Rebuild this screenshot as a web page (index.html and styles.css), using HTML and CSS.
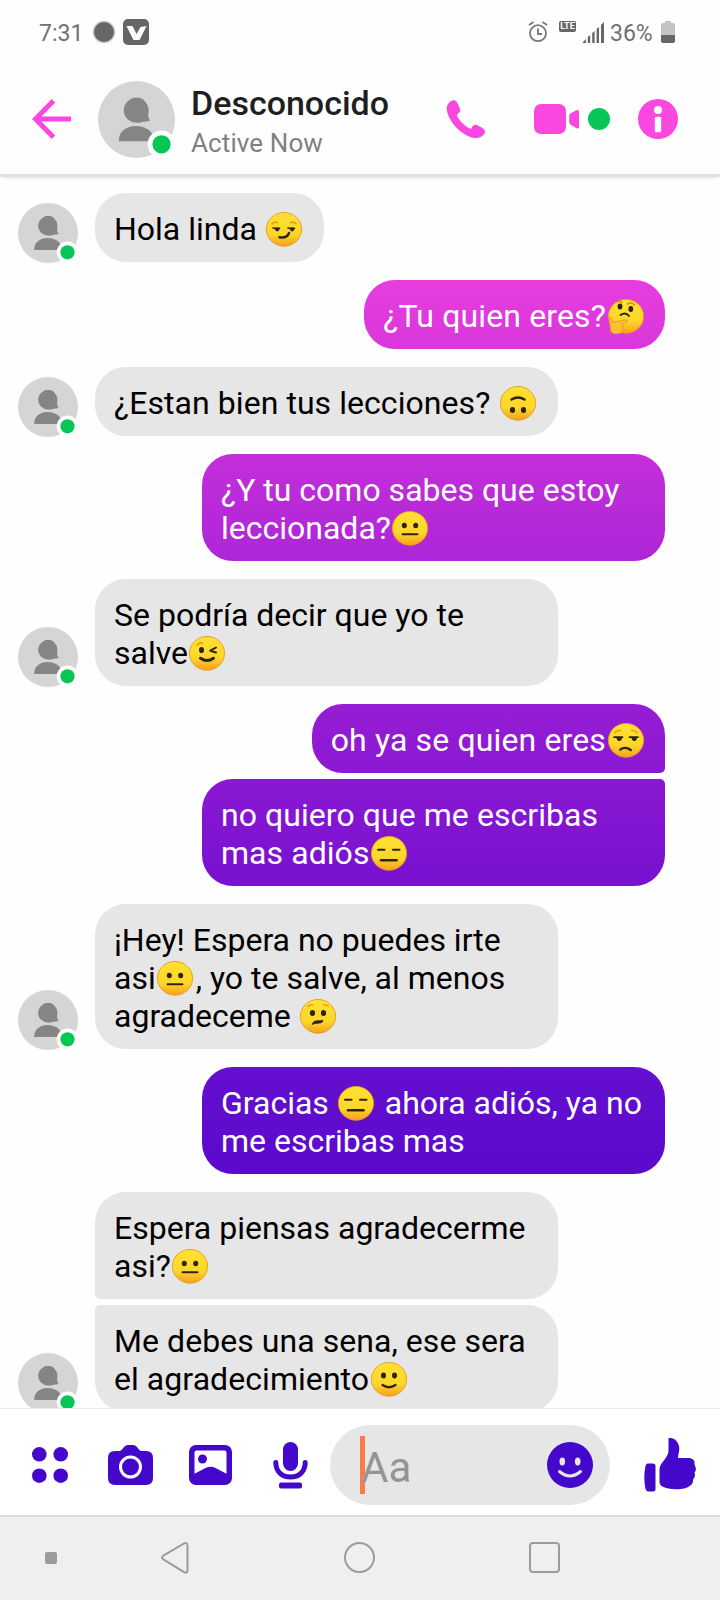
FILE: index.html
```html
<!DOCTYPE html>
<html lang="es">
<head>
<meta charset="utf-8">
<title>Desconocido</title>
<link rel="stylesheet" href="styles.css">
</head>
<body>
<svg class="defs" width="0" height="0" aria-hidden="true">
  <defs>
    <linearGradient id="skin" x1="0" y1="0" x2="0" y2="1">
      <stop offset="0" stop-color="#fee233"/>
      <stop offset=".65" stop-color="#fdd62a"/>
      <stop offset="1" stop-color="#f79f1f"/>
    </linearGradient>
    <symbol id="avatar" viewBox="0 0 60 60">
      <circle cx="30" cy="30" r="30" fill="#d5d5d5"/>
      <circle cx="29.700" cy="22.800" r="9.600" fill="#858585"/>
      <path d="M25 14.300l3-1.200h4.500l3 1.500 3.700 6v7.700l1.400 2.600-4.600.8-5 1z" fill="#858585"/>
      <path d="M16.300 47v-1.500c0-6 6-10.500 13.200-10.500s13 3.700 14 9.200V47z" fill="#858585"/>
      <circle cx="49.500" cy="49.300" r="10.800" fill="#fff"/>
      <circle cx="49.500" cy="49.300" r="7.100" fill="#06c755"/>
    </symbol>
    <symbol id="face" viewBox="0 0 40 35">
      <ellipse cx="20" cy="17.300" rx="17.600" ry="16.900" fill="url(#skin)" stroke="#eb9a1c" stroke-width=".9"/>
    </symbol>
    <symbol id="smirk" viewBox="0 0 40 35">
      <use href="#face"/>
      <path d="M8 12q2.500-3 5.500-1.500M26.500 10.500q3-1.500 5.500 1.500" fill="none" stroke="#e5991f" stroke-width="1.400" stroke-linecap="round"/>
      <path d="M9 16q3.500.8 6.500.2M24 16q3.500.8 6.500.2" fill="none" stroke="#2f230f" stroke-width="1.600" stroke-linecap="round"/>
      <circle cx="13.200" cy="17.300" r="2.100" fill="#2f230f"/><circle cx="28.100" cy="17.300" r="2.100" fill="#2f230f"/>
      <path d="M15.500 25.300q7.500 1.200 9.500-4.300" fill="none" stroke="#2f230f" stroke-width="2.400" stroke-linecap="round"/>
    </symbol>
    <symbol id="thinking" viewBox="0 0 40 35">
      <use href="#face"/>
      <ellipse cx="14" cy="7.500" rx="2.400" ry="2.900" fill="#2f230f"/><ellipse cx="24.800" cy="10" rx="2.400" ry="2.900" fill="#2f230f"/>
      <path d="M10 3.500q3-2.500 6 0M21.500 5q4-2.500 7 1" fill="none" stroke="#d98a1b" stroke-width="1.500" stroke-linecap="round"/>
      <path d="M14.500 16q5-3.500 8.500 1" fill="none" stroke="#2f230f" stroke-width="1.900" stroke-linecap="round"/>
      <path d="M3.500 18.500q1.800-.5 2.500 2l1.200 3q5-1.500 12.800-2.700 2.200 0 1.500 1.700l-5.500 2.500q2 5-.5 8.500-3 2.500-8 1-3.500-1-3.300-6z" fill="#fcc033" stroke="#e8961c" stroke-width=".9"/>
    </symbol>
    <symbol id="upside" viewBox="0 0 40 35">
      <use href="#face"/>
      <path d="M13.500 13.500q6.500-4 13 0" fill="none" stroke="#2f230f" stroke-width="2.400" stroke-linecap="round"/>
      <ellipse cx="14.500" cy="24" rx="2.600" ry="3" fill="#2f230f"/><ellipse cx="25.500" cy="24" rx="2.600" ry="3" fill="#2f230f"/>
    </symbol>
    <symbol id="neutral" viewBox="0 0 40 35">
      <use href="#face"/>
      <ellipse cx="14.300" cy="14.500" rx="2.500" ry="2.800" fill="#2f230f"/><ellipse cx="25.700" cy="14.500" rx="2.500" ry="2.800" fill="#2f230f"/>
      <path d="M12.500 23.200h15" stroke="#2f230f" stroke-width="1.900" stroke-linecap="round"/>
    </symbol>
    <symbol id="wink" viewBox="0 0 40 35">
      <use href="#face"/>
      <path d="M10 9.500q1.500-3.200 5.500-2.500" fill="none" stroke="#e5991f" stroke-width="1.500" stroke-linecap="round"/>
      <ellipse cx="14.500" cy="14" rx="2.500" ry="3.100" fill="#2f230f"/>
      <path d="M29 11.500l-5.700 3.200 5.700 1.800" fill="none" stroke="#2f230f" stroke-width="2" stroke-linecap="round" stroke-linejoin="round"/>
      <path d="M13.500 22.200q6.500 4.600 13 0" fill="none" stroke="#2f230f" stroke-width="2.900" stroke-linecap="round"/>
    </symbol>
    <symbol id="unamused" viewBox="0 0 40 35">
      <use href="#face"/>
      <path d="M8.500 10q2.500-3 6-2.500M25.500 7.500q3.500-.5 6 2.500" fill="none" stroke="#e5991f" stroke-width="1.400" stroke-linecap="round"/>
      <path d="M8 14.200h8.500M23.500 14.200h8.500" stroke="#2f230f" stroke-width="1.700" stroke-linecap="round"/>
      <path d="M10.500 14.500h5.500a2.700 3.400 0 0 1-5.500 0zM25.500 14.500h5.500a2.700 3.400 0 0 1-5.500 0z" fill="#2f230f"/>
      <path d="M14.300 26.500q5-3.500 10.500.5" fill="none" stroke="#2f230f" stroke-width="2.400" stroke-linecap="round"/>
    </symbol>
    <symbol id="expressionless" viewBox="0 0 40 35">
      <use href="#face"/>
      <path d="M9 13.700h6.500M24 13.700h6.500" stroke="#2f230f" stroke-width="2" stroke-linecap="round"/>
      <path d="M12 24.200h15.500" stroke="#2f230f" stroke-width="2.500" stroke-linecap="round"/>
    </symbol>
    <symbol id="confused" viewBox="0 0 40 35">
      <use href="#face"/>
      <path d="M10 7.500q2-2.200 5-1.800M25.500 5.700q3-.4 5 1.800" fill="none" stroke="#e5991f" stroke-width="1.400" stroke-linecap="round"/>
      <ellipse cx="14.500" cy="14" rx="2.600" ry="3" fill="#2f230f"/><ellipse cx="25.500" cy="14" rx="2.600" ry="3" fill="#2f230f"/>
      <path d="M14 25.500q1.500-4 6-3.700 2.500.2 5-.6-.3 3-4.500 3-3.500-.3-6.500 1.300z" fill="#2f230f" stroke="#2f230f" stroke-width=".8" stroke-linejoin="round"/>
    </symbol>
    <symbol id="smile" viewBox="0 0 40 35">
      <use href="#face"/>
      <ellipse cx="14.500" cy="13.500" rx="2.500" ry="3" fill="#2f230f"/><ellipse cx="25.500" cy="13.500" rx="2.500" ry="3" fill="#2f230f"/>
      <path d="M13.500 23q6.500 4.500 13 0" fill="none" stroke="#2f230f" stroke-width="2.300" stroke-linecap="round"/>
    </symbol>
  </defs>
</svg>

<div class="screen">
  <div class="status">
    <span class="time">7:31</span>
    <svg class="rec" width="24" height="24" viewBox="0 0 24 24"><circle cx="12" cy="12" r="11.300" fill="#ccc"/><circle cx="12" cy="12" r="10" fill="#666"/></svg>
    <svg class="vee" width="26" height="26" viewBox="0 0 26 26"><rect width="26" height="26" rx="5" fill="#666"/><path d="M3.500 7h6l4 8 4-7 6-1-7 14h-6z" fill="#fff"/></svg>
    <svg class="alarm" width="20" height="22" viewBox="0 0 20 22" fill="none" stroke="#777" stroke-width="1.800"><circle cx="10" cy="12.200" r="8"/><path d="M10 7.500V13h4M1 4l4.500-3M19 4l-4.500-3"/></svg>
    <span class="lte">LTE</span>
    <svg class="signal" width="22" height="21" viewBox="0 0 22 21" fill="#666"><path d="M0 21v-1l3-3v4zM4.800 21v-6l2.400-2v8zM9.200 21v-10l2.400-2v12zM13.600 21V7l2.400-2v16zM18 21V3l3-3v21z"/></svg>
    <span class="charge">36%</span>
    <svg class="battery" width="14" height="22" viewBox="0 0 14 22"><path d="M4 0h6v2h2.500q1.500 0 1.500 1.500V14H0V3.500Q0 2 1.500 2H4z" fill="#c4c4c4"/><path d="M0 14h14v6q0 2-2 2H2q-2 0-2-2z" fill="#666"/></svg>
  </div>

  <header class="header">
    <svg class="back" width="40" height="40" viewBox="0 0 40 40" fill="none" stroke="#f947e0" stroke-width="5"><path d="M21.500 1.800L3.500 20l18 18.200M3 20h36"/></svg>
    <svg class="photo" width="77" height="77"><use href="#avatar"/></svg>
    <div class="who">
      <div class="name">Desconocido</div>
      <div class="active">Active Now</div>
    </div>
    <svg class="phone" width="39" height="39" viewBox="0 0 39 39" fill="#f947e0"><path d="M7 .3C4 1 .8 4.300.7 8.300c0 6.200 4.800 14.700 10.800 20.500 6 5.700 13.500 9.700 19.500 9.300 4-.2 7.300-3 7.900-6 .3-1.800-.8-3.200-2.500-4.200l-4.600-2.500c-2.500-1.200-5-.3-5.800 2-.3 1.200-1.200 1.500-2.500.9C18.300 25.500 13.500 20.700 11.300 16.200c-.7-1.300-.2-2.200 1-2.800 2.200-1 2.500-3.500 1.300-5.600L11.200 2.500C10.200.8 8.600 0 7 .3z"/></svg>
    <svg class="video" width="46" height="30" viewBox="0 0 46 30" fill="#f947e0"><rect width="32" height="30" rx="7"/><path d="M42.500 6.300q2.500-1 2.500 1.200v15.500q0 2.200-2.500 1.200L37 21q-1.800-1-1.800-3v-6q0-2 1.800-3z"/></svg>
    <span class="online"></span>
    <svg class="info" width="40" height="40" viewBox="0 0 40 40"><circle cx="20" cy="20" r="20" fill="#f947e0"/><circle cx="20" cy="11" r="4" fill="#fff"/><rect x="16.800" y="17.800" width="6.400" height="15.500" rx="1.500" fill="#fff"/></svg>
  </header>

  <main class="chat">
    <div class="group in">
      <svg class="pic"><use href="#avatar"/></svg>
      <div class="stack"><div class="bubble">Hola linda <svg class="emoji"><use href="#smirk"/></svg></div></div>
    </div>
    <div class="group out">
      <div class="bubble loose">¿Tu quien eres?<svg class="emoji"><use href="#thinking"/></svg></div>
    </div>
    <div class="group in">
      <svg class="pic"><use href="#avatar"/></svg>
      <div class="stack"><div class="bubble wide airy">¿Estan bien tus lecciones? <svg class="emoji"><use href="#upside"/></svg></div></div>
    </div>
    <div class="group out">
      <div class="bubble wide">¿Y tu como sabes que estoy<br>leccionada?<svg class="emoji"><use href="#neutral"/></svg></div>
    </div>
    <div class="group in">
      <svg class="pic"><use href="#avatar"/></svg>
      <div class="stack"><div class="bubble wide">Se podría decir que yo te<br>salve<svg class="emoji"><use href="#wink"/></svg></div></div>
    </div>
    <div class="group out">
      <div class="bubble first loose">oh ya se quien eres<svg class="emoji"><use href="#unamused"/></svg></div>
      <div class="bubble wide last airy">no quiero que me escribas<br>mas adiós<svg class="emoji"><use href="#expressionless"/></svg></div>
    </div>
    <div class="group in">
      <svg class="pic"><use href="#avatar"/></svg>
      <div class="stack"><div class="bubble wide">¡Hey! Espera no puedes irte<br>asi<svg class="emoji"><use href="#neutral"/></svg>, yo te salve, al menos<br>agradeceme <svg class="emoji"><use href="#confused"/></svg></div></div>
    </div>
    <div class="group out">
      <div class="bubble wide">Gracias <svg class="emoji"><use href="#expressionless"/></svg> ahora adiós, ya no<br>me escribas mas</div>
    </div>
    <div class="group in">
      <svg class="pic"><use href="#avatar"/></svg>
      <div class="stack">
        <div class="bubble wide first">Espera piensas agradecerme<br>asi?<svg class="emoji"><use href="#neutral"/></svg></div>
        <div class="bubble wide last airy">Me debes una sena, ese sera<br>el agradecimiento<svg class="emoji"><use href="#smile"/></svg></div>
      </div>
    </div>
  </main>

  <footer class="composer">
    <svg class="apps" width="36" height="36" viewBox="0 0 36 36" fill="#4408cc"><circle cx="7.300" cy="7.300" r="7.300"/><circle cx="28.700" cy="7.300" r="7.300"/><circle cx="7.300" cy="28.700" r="7.300"/><circle cx="28.700" cy="28.700" r="7.300"/></svg>
    <svg class="camera" width="45" height="40" viewBox="0 0 45 40"><path d="M7 6h3.500c2 0 2.700-.5 4-2 2-2.500 3-4 6-4h4c3 0 4 1.500 6 4 1.300 1.500 2 2 4 2H38q7 0 7 7v20q0 7-7 7H7q-7 0-7-7V13q0-7 7-7z" fill="#4408cc"/><circle cx="22.500" cy="22" r="10" fill="none" stroke="#fff" stroke-width="3"/></svg>
    <svg class="gallery" width="43" height="40" viewBox="0 0 43 40"><rect width="43" height="40" rx="7" fill="#4408cc"/><path d="M7.500 5.500h28q2 0 2 2v21.200L26.500 23q-5-2.700-10 0L5.500 28.700V7.500q0-2 2-2z" fill="#fff"/><circle cx="13.500" cy="14" r="4.500" fill="#4408cc"/></svg>
    <svg class="mic" width="35" height="47" viewBox="0 0 35 47"><rect x="10" y="0" width="15" height="29" rx="7.500" fill="#4408cc"/><path d="M2.800 20.500c0 9 6 14.500 14.700 14.500s14.700-5.500 14.700-14.500" fill="none" stroke="#4408cc" stroke-width="5" stroke-linecap="round"/><rect x="6" y="40.500" width="23" height="6" rx="2" fill="#4408cc"/></svg>
    <div class="field">
      <span class="caret"></span>
      <span class="hint">Aa</span>
      <svg class="sticker" width="46" height="46" viewBox="0 0 46 46"><circle cx="23" cy="23" r="23" fill="#4408cc"/><ellipse cx="15.300" cy="19.500" rx="2.800" ry="4" fill="#e6e6e6"/><ellipse cx="30.700" cy="19.500" rx="2.800" ry="4" fill="#e6e6e6"/><path d="M12.500 29.500q10.500 9 21 0" fill="none" stroke="#e6e6e6" stroke-width="3" stroke-linecap="round"/></svg>
    </div>
    <svg class="like" width="52" height="54" viewBox="0 0 52 54" fill="#4408cc"><path d="M4 25.500h5q2.500 0 2.500 2.500v23q0 2.500-2.500 2.500H4.500Q2 53.500 1.300 50q-2-11 0-21 .4-3.500 2.700-3.500z"/><path d="M24.500 1c-.5-1 .7-1 2-1 5 0 8.800 5.500 8.800 10.500 0 4-1.300 6-1.300 9.500h10c4 0 7 2 6.500 5.300-.2 1 .2 2 .6 2.700 1.300 2.500.8 5-.6 6.500 1 3 .2 5.700-1.500 7 .5 4-1.800 6-4 6.700-2 2-6.500 3-13 3-6 0-10-1-13-2.500-3-1.400-3.500-3-3.500-6V32c0-5 3-7.500 5.500-11 2.500-3.500 3.500-5.500 3.500-9z"/></svg>
  </footer>

  <nav class="nav">
    <span class="pin"></span>
    <svg class="tri" width="28" height="32" viewBox="0 0 28 32" fill="none" stroke="#9b9b9b" stroke-width="2"><path d="M23 1.500L2.300 13.700q-2.500 1.800 0 3.600L23 30.200q3.500 1.500 3.500-2V3.500q0-3.500-3.500-2z"/></svg>
    <span class="home"></span>
    <span class="recent"></span>
  </nav>
</div>
</body>
</html>
```

FILE: styles.css
```css
* { box-sizing: border-box; }

body {
  margin: 0;
  background: #fff;
  font-family: Roboto, "Noto Sans", sans-serif;
}

svg { display: block; flex: none; }
.defs { position: absolute; }

.screen {
  width: 720px;
  height: 1600px;
  display: flex;
  flex-direction: column;
  overflow: hidden;
  background: #fefefe;
}

/* Status bar */
.status {
  flex: none;
  height: 64px;
  padding-left: 39px;
  display: flex;
  align-items: center;
  font-size: 23px;
  color: #707070;
}
.time { width: 53px; margin-top: 2px; }
.vee { margin-left: 7px; }
.alarm { margin-left: 379px; }
.lte {
  width: 17px;
  height: 11px;
  margin: -11px 7px 0 11px;
  border-radius: 2px;
  background: #666;
  color: #fff;
  font-size: 9px;
  font-weight: 700;
  line-height: 11px;
  text-align: center;
}
.charge { width: 45px; margin: 2px 0 0 5px; }
.battery { margin-left: 6px; }

/* Conversation header */
.header {
  flex: none;
  height: 113px;
  padding: 0 0 3px 32px;
  display: flex;
  align-items: center;
  border-bottom: 3px solid #e0e0e0;
  box-shadow: 0 4px 4px -3px rgba(0, 0, 0, .12);
}
.photo { margin: 4px 0 0 26px; }
.who { width: 255px; margin-left: 16px; padding-top: 10px; }
.name {
  font-size: 34px;
  font-weight: 500;
  line-height: 40px;
  color: #1f1f1f;
}
.active {
  margin-top: 1px;
  font-size: 26px;
  line-height: 38px;
  letter-spacing: .1px;
  color: #808080;
}
.back, .phone, .video, .info { margin-top: 3px; }
.video { margin-left: 49px; }
.online {
  width: 22px;
  height: 22px;
  margin: 3px 28px 0 8px;
  border-radius: 50%;
  background: #06c755;
}

/* Messages */
.chat {
  flex: 1;
  min-height: 0;
  overflow: hidden;
  padding: 16px 55px 0 18px;
  display: flex;
  flex-direction: column;
  gap: 18px;
}
.group { flex: none; display: flex; }
.in { align-items: flex-end; gap: 17px; }
.out { flex-direction: column; align-items: flex-end; gap: 6px; }
.stack {
  display: flex;
  flex-direction: column;
  align-items: flex-start;
  gap: 6px;
}
.pic { width: 60px; height: 60px; margin-bottom: -1px; }
.bubble {
  padding: 17px 19px 14px;
  border-radius: 31px;
  background: #e6e6e6;
  color: #000;
  font-size: 32px;
  line-height: 38px;
  white-space: nowrap;
}
.wide { width: 463px; }
.airy { letter-spacing: .06px; }
.loose { letter-spacing: .14px; }
.out .bubble {
  color: #fff;
  background: linear-gradient(#f947e0 120px, #e63cde 285px, #ad26d7 561px, #961dd4 704px, #7811d0 886px, #650fd0 1067px, #5a0acb 1174px, #4408cc 1408px) fixed;
}
.out .first { border-bottom-right-radius: 5px; }
.out .last { border-top-right-radius: 5px; }
.in .first { border-bottom-left-radius: 5px; }
.in .last { border-top-left-radius: 5px; }
.emoji {
  display: inline-block;
  width: 40px;
  height: 35px;
  margin: 0 .5px 0 -.5px;
  vertical-align: -7px;
}

/* Composer */
.composer {
  flex: none;
  height: 107px;
  padding: 16px 0 10px 32px;
  display: flex;
  align-items: center;
  border-top: 1px solid #ececec;
  background: #fff;
}
.camera { margin-left: 39.5px; }
.gallery { margin-left: 36.5px; }
.mic { margin-left: 41px; }
.field {
  width: 280px;
  height: 80px;
  margin-left: 22px;
  padding: 0 17px 0 30px;
  display: flex;
  align-items: center;
  border-radius: 40px;
  background: #e6e6e6;
}
.caret { width: 5px; height: 58px; background: #f97b4d; }
.hint {
  margin: 5px auto 0 -4px;
  font-size: 42px;
  line-height: 50px;
  color: #949494;
}
.like { margin: -1px 0 0 34px; }

/* System navigation */
.nav {
  flex: none;
  height: 85px;
  padding: 0 0 2px 45px;
  display: flex;
  align-items: center;
  border-top: 2px solid #dcdcdc;
  background: #efefef;
}
.pin { width: 12px; height: 12px; border-radius: 2px; background: #9b9b9b; }
.tri { margin-left: 104px; }
.home {
  width: 31px;
  height: 31px;
  margin-left: 155px;
  border: 2px solid #9b9b9b;
  border-radius: 50%;
}
.recent {
  width: 31px;
  height: 31px;
  margin-left: 154px;
  border: 2px solid #9b9b9b;
  border-radius: 4px;
}
```
